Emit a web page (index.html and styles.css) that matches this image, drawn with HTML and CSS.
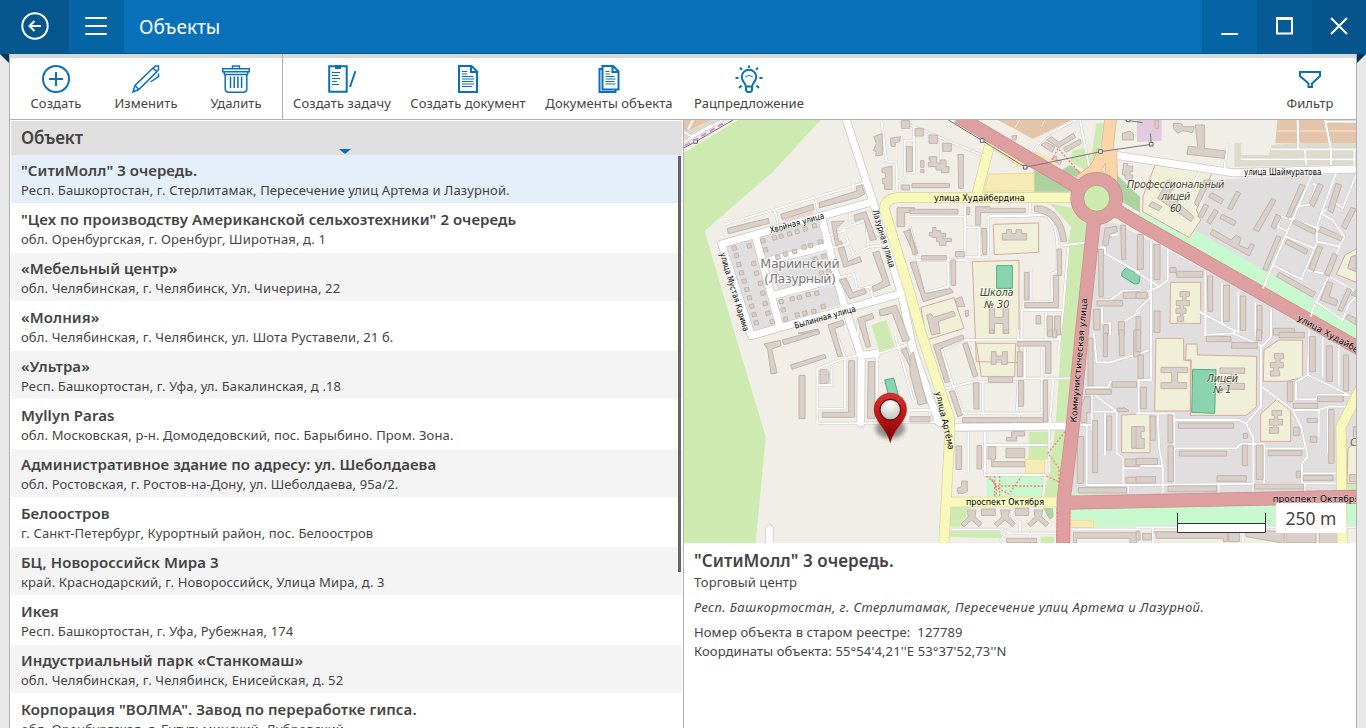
FILE: index.html
```html
<!DOCTYPE html>
<html lang="ru">
<head>
<meta charset="utf-8">
<title>Объекты</title>
<link rel="stylesheet" href="styles.css">
</head>
<body>
<div class="app">
<header class="titlebar">
  <button class="tb-back"><svg width="30" height="30" viewBox="0 0 30 30"><circle cx="15" cy="15" r="12.7"/><path d="M21 15H10M14.500 10 9.500 15l5 5"/></svg></button>
  <button class="tb-menu"><svg width="22" height="18" viewBox="0 0 22 18"><path d="M0 1h22M0 9h22M0 17h22"/></svg></button>
  <h1>Объекты</h1>
  <button class="tb-min"><svg width="17" height="18" viewBox="0 0 17 18"><path d="M0 17h17"/></svg></button>
  <button class="tb-max"><svg width="17" height="18" viewBox="0 0 17 18"><path d="M1 1h15v15.500H1z"/><path d="M0 1.500h17" stroke-width="3"/></svg></button>
  <button class="tb-close"><svg width="18" height="18" viewBox="0 0 18 18"><path d="M1 1l16 16M17 1 1 17"/></svg></button>
</header>
<div class="frame">
  <svg class="fold left" width="9" height="9"><path d="M0 0h9v9z"/></svg>
  <main class="window">
    <nav class="toolbar">
      <div class="group edit">
        <button class="tool"><svg viewBox="0 0 28 28"><circle cx="14" cy="14" r="13"/><path d="M14 7v14M7 14h14"/></svg><span>Создать</span></button>
        <button class="tool"><svg viewBox="0 0 28 28"><path class="thin" d="M1 27 3 20.500 21 3l3.800 3.800L6.800 24.500zM3 20.500l3.800 4M21.500 2.800l1.800-1.800h3.200v3.500l-1.700 2M26.500 8.500v3L18.500 17"/></svg><span>Изменить</span></button>
        <button class="tool"><svg viewBox="0 0 28 28"><path class="thin" d="M.7 3.700h26.600v3H.7zM2 7l.5 2.500h23L26 7M3.200 9.500v14q0 3.800 3.500 3.800h14.600q3.500 0 3.500-3.800v-14M10.500 4V1h7v3M8.500 11.500V23M12.200 11.500V23M15.900 11.500V23M19.600 11.500V23"/></svg><span>Удалить</span></button>
      </div>
      <div class="group docs">
        <button class="tool w1"><svg viewBox="0 0 28 28"><path d="M1.200 1.200h17.500v25.600H1.200z"/><path class="solid" d="M7 0h6v4H7z"/><path class="line" d="M4 7.500h8M4 10.500h6.500M4 13.500h8M4 16.500h5M4 19.500h7"/><path d="M27.500 6 22 22"/></svg><span>Создать задачу</span></button>
        <button class="tool w2"><svg viewBox="0 0 28 28"><path d="M5 1h12.500L23 6.500V27H5zM17 1v6h6"/><path class="line" d="M8 6.500h5M8 9h5M8 11.500h11M8 14h12M8 16.500h11M8 19h12M8 21.500h10"/></svg><span>Создать документ</span></button>
        <button class="tool w3"><svg viewBox="0 0 28 28"><path d="M7.500 1h10.700L23.500 6.500v18h-16zM17.500 1v6h6M7 4H4.500v23H20.500v-2"/><path class="line" d="M10.500 6.500h4M10.500 9h4M10.500 11.500h9M10.500 14h10M10.500 16.500h9M10.500 19h10"/></svg><span>Документы объекта</span></button>
        <button class="tool w4"><svg viewBox="0 0 28 28"><path d="M10.800 21.500c0-3.500-4-4.500-4-9.500a7.200 7.200 0 0 1 14.400 0c0 5-4 6-4 9.500zM11 22v3.500l1.500 1.500h3l1.500-1.500V22M14 .5V3M5 2.700l2 2M23 2.700l-2 2M.5 13h3M24.500 13h3M4 23l2.500-2.500M24 23l-2.500-2.500"/><path class="line" d="M10.500 12q3.500-3 7 0"/></svg><span>Рацпредложение</span></button>
      </div>
      <button class="tool filter"><svg viewBox="0 0 28 28"><path d="M4 7h20v4l-8 7.500V22h-3.500v-3.500L4 11z"/></svg><span>Фильтр</span></button>
    </nav>
    <div class="content">
      <section class="list">
        <div class="list-head"><span>Объект</span><i class="sort"></i></div>
        <div class="rows">
          <article class="sel"><b>"СитиМолл" 3 очередь.</b><p>Респ. Башкортостан, г. Стерлитамак, Пересечение улиц Артема и Лазурной.</p></article>
          <article><b>"Цех по производству Американской сельхозтехники" 2 очередь</b><p>обл. Оренбургская, г. Оренбург, Широтная, д. 1</p></article>
          <article><b>«Мебельный центр»</b><p>обл. Челябинская, г. Челябинск, Ул. Чичерина, 22</p></article>
          <article><b>«Молния»</b><p>обл. Челябинская, г. Челябинск, ул. Шота Руставели, 21 б.</p></article>
          <article><b>«Ультра»</b><p>Респ. Башкортостан, г. Уфа, ул. Бакалинская, д .18</p></article>
          <article><b>Myllyn Paras</b><p>обл. Московская, р-н. Домодедовский, пос. Барыбино. Пром. Зона.</p></article>
          <article><b>Административное здание по адресу: ул. Шеболдаева</b><p>обл. Ростовская, г. Ростов-на-Дону, ул. Шеболдаева, 95а/2.</p></article>
          <article><b>Белоостров</b><p>г. Санкт-Петербург, Курортный район, пос. Белоостров</p></article>
          <article><b>БЦ, Новороссийск Мира 3</b><p>край. Краснодарский, г. Новороссийск, Улица Мира, д. 3</p></article>
          <article><b>Икея</b><p>Респ. Башкортостан, г. Уфа, Рубежная, 174</p></article>
          <article><b>Индустриальный парк «Станкомаш»</b><p>обл. Челябинская, г. Челябинск, Енисейская, д. 52</p></article>
          <article><b>Корпорация "ВОЛМА". Завод по переработке гипса.</b><p>обл. Оренбургская, г. Бугульминский, Дубровский</p></article>
        </div>
        <i class="scroll"></i>
      </section>
      <section class="detail">
        <div class="map">
<svg class="osm" width="672" height="423" viewBox="3 0 2016 1269">
<defs>
  <radialGradient id="ball" cx=".5" cy=".25" r=".8"><stop offset="0" stop-color="#fff"/><stop offset="1" stop-color="#bcbcbc"/></radialGradient>
  <linearGradient id="pin" x1="0" y1="0" x2="0" y2="1"><stop offset="0" stop-color="#dc3030"/><stop offset=".5" stop-color="#b91414"/><stop offset="1" stop-color="#700"/></linearGradient>
  <filter id="soft"><feGaussianBlur stdDeviation="7"/></filter>
  <g id="lanes">
    <path d="M125,313 545,188M275,272 285,308M398,238 405,272M510,190V210M0,32 25,50 85,15M15,28 30,0M0,68 120,0"/>
    <path d="M480,325 550,300 555,382 510,402 480,325M555,382 600,375M490,330 440,345M430,388 495,372M510,402 480,440M470,472 512,462 525,510 560,500 570,535M525,600V645M500,280V310M595,0 610,125 640,125 643,215M643,188 665,170V62H690"/>
    <path d="M403,910V745L486,715 585,690M446,735V795H405M403,866H486V715L460,640M403,910H533L800,905M582,700V900M590,700 690,668M635,640 690,840M740,905V870L681,870"/>
    <g transform="translate(681 0)">
      <path d="M0,15 215,105M12,15V158H0M92,70V125M0,290H165V248M165,290V410L215,412H235V290L360,288V250M165,322H208V410M235,288 400,285Q440,300 442,380V455L425,460 427,545H340V570H460M0,320 20,400V420H165M115,412V500L40,520 20,430M362,445V540M442,378 528,368M475,380 460,560 445,700M408,575V645M335,570V700M510,0 540,155M370,100Q380,50 500,0"/>
      <path d="M560,383H585V400L690,460M600,345 580,370V383M600,345 620,345V315M560,540H600L640,512H690M580,545 576,570V610H600V645M625,615 690,575M685,390V420"/>
    </g>
    <g transform="translate(1359 0)">
      <path d="M275,70 265,150M190,155 145,250M405,88H660M315,118H660M485,0 487,85M567,0 585,88V135M507,90 510,135M655,85V135M570,5H660M600,160 545,310 542,370 495,480M530,160 380,505M660,165 620,265 600,250 555,280 590,300 625,350 610,380 545,365M530,190 540,195 520,255 490,258M470,295 545,325 625,350M450,350 535,385M470,298 435,290 425,320 455,335M515,450 580,465 520,590M610,380 580,470 660,515M540,545 620,600 640,550 660,530M410,435 500,480"/>
      <path d="M0,455 70,500 95,480V385M45,365V645M0,575 45,530 35,515 70,500M208,450V645M258,490V610M307,515V640M358,545V645M405,565V645M190,575 300,635"/>
    </g>
    <g transform="translate(681 630)">
      <path d="M95,60 160,30 448,28M95,60 130,170 190,155H325L320,245M345,55V145M395,55V250H160L130,170M325,145H480M218,155V255M105,175 135,170M325,0V30M445,0V30M430,145 418,290V430M175,305V428M225,305V435H405L400,500M225,345H410M328,250V285M120,598H280L300,610H440M285,610 270,635M305,535V560L330,575V605M360,640V610M480,598H690"/>
      <path d="M550,0 560,97H600L690,70M525,172H595L600,155H690M535,180 620,245H550M545,180V300M530,285V465H690M585,250V375M620,245V370L640,385V465M545,285H510M655,465V490M640,415H690"/>
    </g>
    <g transform="translate(1359 630)">
      <path d="M45,0V150H8V250M0,75 40,60M0,250H115V460M65,250 70,360 80,405V490M0,408H80M0,465 500,460M115,270H310L330,280 375,230V48M208,0V15L290,10 300,0M290,10 380,48 405,20V0M330,280 352,325V490M115,355H300L315,342H385V460M385,355H505M378,170 470,240 495,290 515,380 498,400V460M470,240H550L575,230H630M548,240V320M575,235V370M520,0 515,135 480,155V208H540L545,195H640L515,135M500,430H600M500,460H600M507,460V490M248,465V490M560,0V140M608,0V170M0,592H660M50,595V640M320,595V640M448,595V640M545,595V640"/>
    </g>
  </g>
  <g id="streets">
    <path d="M490,0 570,245 655,520 691,690 766,905 810,922 1156,918M1290,105 1359,115 1650,158 2030,147M116,372 570,245M116,372 205,647 655,520M218,350 290,620M415,290 480,545 535,710 533,910M535,705 580,702M265,420 435,378M275,525 455,478M259,1269V1226"/>
  </g>
  <g id="avenues">
    <path d="M1165,233H645Q598,238 606,275L681,520 716,645 798,890 801,930 790,1130 782,1280M921,70 881,225M790,1146H1140M2040,790 1974,920 1976,1120M1976,1150 1978,1280"/>
  </g>
  <g id="trunks">
    <path d="M825,-10 1160,187 1241,235 1359,306 2040,692M1234,290 1196,645 1168,930 1142,1140 1140,1280M1150,1148 1359,1144 2030,1130"/>
    <circle cx="1241" cy="235" r="58"/>
  </g>
</defs>
<rect class="land" width="2022" height="1269"/>
<path class="forest" d="M0,100 165,0H413L270,155 65,333 155,640 248,950 218,1269H0z"/>
<path class="indust" d="M0,0H85L0,40zM945,0 1050,55 1110,0z"/>
<path class="yard" d="M0,42 85,0H130L0,75z"/>
<path class="indust" d="M1783,0H2022V70H1777zM945,0H1165L1050,57z"/>
<path class="ind-line" d="M1780,33H2022M1560,0M995,25 1010,0M1075,20 1085,0"/>
<path class="yard" d="M1654,70H1675V105H1758L1765,75 1830,70H2022V135L1654,140z"/>
<path class="mall" d="M1362,0H1436V62L1362,66z"/>
<path class="resid" d="M225,350 410,305 430,368 238,420zM130,380 210,360 280,635 200,645zM265,440 440,395 460,475 285,515zM285,540 465,492 480,550 305,610z"/>
<path class="resid" d="M1250,310 1300,310 2022,690V1130H1160L1190,900zM1584,180 2022,160V620L1535,335 1545,290z"/>
<path class="lawn" d="M1379,272 1519,353 1540,333 2022,612V680L1359,290zM1160,1165 2022,1150V1215L1160,1222zM910,1068H1085V1130H910zM1160,1118h100v8h-100z"/>
<path class="forest" d="M1100,250 1164,320 1150,400 1136,645 1117,930 1085,1130H1135L1176,645 1215,310 1170,265zM1240,10 1262,10 1250,90 1225,160 1160,125 1170,90 1200,85 1225,110zM565,615 610,600 635,680 590,695zM800,1160H865L830,1220H800zM800,1233H950L960,1255 800,1250zM1037,935H1098V1018H1037zM1073,1250h40v20h-40zM1990,1095h32v20h-32z"/>
<path class="wood" d="M1052,150 1180,205 1170,215H1052zM1130,155 1160,135 1195,155 1180,170zM1285,115 1302,120V165L1371,230V278L1300,235 1270,190zM1080,1163 1110,1165 1112,1190 1100,1200z"/>
<path class="school" d="M931,313 1067,309V397L934,404zM868,425 1008,421V728L880,725zM714,562 813,533 843,625 730,660zM1463,487H1553V610H1461zM1416,135 1587,158 1540,270 1553,300 1519,353 1379,275 1380,230zM1419,655H1502L1502,720H1525L1522,873H1415zM1510,672H1542L1543,705 1721,709 1720,860 1690,886H1522V722H1508zM1359,883H1401V998H1316V885zM1787,660 1859,661V772L1809,784H1741L1743,690zM1780,839 1823,872V964H1733V882zM2022,385 1986,405 1960,463 2022,488zM1995,985 2022,960V1090H1992zM880,670H998L995,770 895,769z"/>
<path class="parking" d="M918,162 1053,160V212L903,214zM1053,94 1120,130 1120,145 1053,102zM935,90 1030,130 1010,140zM1027,1018H1085V1060H1027zM1161,1202H1232V1223H1161z"/>
<path class="pitch" d="M941,437H988V505H941zM1331,443 1371,465 1368,490 1355,492 1316,468 1318,455zM1529,748 1599,749 1595,880 1526,877zM605,780 632,774 650,840 620,840z"/>
<use href="#lanes" class="lane-case"/>
<use href="#streets" class="street-case"/>
<use href="#lanes" class="lane"/>
<use href="#streets" class="street"/>
<g class="bld">
  <path d="M133,325 256,295 259,310 136,341zM293,283 390,253 393,268 298,299zM408,248 522,213 520,200 537,195 545,222 527,232 410,263zM445,305 484,303 460,325 467,365 475,363 478,372 459,378zM513,285 549,275 580,358 563,362 542,295 516,304zM465,385 483,380 495,425 530,410 536,425 483,442zM569,398 588,393 621,495 572,515 568,500 600,484zM468,480 490,475 509,518 545,505 550,520 500,537zM572,50 598,40 598,105 578,108 580,95 571,92 580,70zM597,145 627,138V208H605V192L598,190V175H607V160L597,157zM622,55 652,50 650,65 638,68 636,80 624,78zM655,2H680V25H655zM670,80H688V155H670zM655,195H680V210H655zM642,263H695V278H665V320H642zM662,335 680,330 705,400 695,405zM523,595 568,580 572,595 545,605 563,680 550,682zM588,570 640,555 680,660 660,665 628,580 592,588zM345,640 405,627 408,640zM435,615 480,600 483,615 455,625 478,708 465,710z"/>
  <path d="M243,672 291,661 294,677 266,687 282,759 264,762 254,687zM298,660 407,630 410,641 303,674zM322,735 425,703 429,714 327,748zM348,766H366V896H348zM411,750 430,748 438,758V785L430,791H411zM497,722H515V892H418V877H497zM556,725H575V895H553zM655,690 670,682 700,780 681,740z"/>
  <path d="M146,380 158,377 162,389 150,392zM153,402 165,399 168,411 156,414zM160,429 172,426 175,438 163,441zM168,454 180,451 183,463 171,466zM176,479 188,476 191,488 179,491zM184,504 196,501 199,513 187,516zM192,529 204,526 207,538 195,541zM199,554 211,551 214,563 202,566zM206,579 218,576 221,588 209,591zM212,604 224,601 227,613 215,616zM191,373 203,370 206,382 194,385zM205,426 217,423 220,435 208,438zM213,455 225,452 228,464 216,467zM225,485 237,482 240,494 228,497zM232,515 244,512 247,524 235,527zM239,546 251,543 254,555 242,558zM247,575 259,572 262,584 250,587zM260,600 272,597 275,609 263,612zM232,358 244,355 247,367 235,370zM240,385 252,382 255,394 243,397zM267,349 279,346 282,358 270,361zM287,344 299,341 302,353 290,356zM312,337 324,334 327,346 315,349zM335,330 347,327 350,339 338,342zM359,322 371,319 374,331 362,334zM387,313 399,310 402,322 390,325zM300,398 312,395 315,407 303,410zM327,390 339,387 342,399 330,402zM356,377 368,374 371,386 359,389zM375,372 387,369 390,381 378,384zM404,361 416,358 419,370 407,373zM277,407 289,404 292,416 280,419zM389,413 401,410 404,422 392,425zM415,404 427,401 430,413 418,416zM272,463 284,460 287,472 275,475zM409,457 421,454 424,466 412,469zM430,450 442,447 445,459 433,462zM320,532 332,529 335,541 323,544zM342,528 354,525 357,537 345,540zM368,519 380,516 383,528 371,531zM394,515 406,512 409,524 397,527zM287,540 299,537 302,549 290,552zM293,565 305,562 308,574 296,577zM300,593 312,590 315,602 303,605zM335,580 347,577 350,589 338,592zM358,575 370,572 373,584 361,587zM385,570 397,567 400,579 388,582zM413,555 425,552 428,564 416,567z"/>
  <g transform="translate(681 0)">
    <path d="M15,25H40V48H15zM57,45H83V70H57zM98,70H124V94H98zM32,122H42V142H32zM32,149H42V158H32zM57,110H80V127L90,132V120H108V140H117V158H95V150H78V140H55V128H62V120H57zM144,103H160V205H146zM6,190H118V203H6zM0,262 8,268H144V282L0,281zM170,262H179V284H170zM197,260H240V265H346V278H212V315H197zM373,258 395,258Q460,275 470,364L453,365Q445,285 374,274zM68,323H78V332H92V340H107V350H97V355H124V365H108V376H88V365H80V352H68V348H58V338H68zM0,325 18,400 10,405 0,375zM35,407H109V420H35zM136,395H164V410H136zM215,325H230V403H218zM277,340H290V329H305V340H318V329H335V340H350V360H277zM122,420H137V496H124zM0,428 18,425 45,520 122,506 130,517 40,545zM343,457H357V540H343zM441,387H455V466H443zM430,466H446V563H345V547H430zM135,538 155,530 165,560 143,560zM165,573 175,570V588L168,590zM50,585 62,580 70,592 130,573 137,587 85,605 90,640 65,645zM238,566H254V592H279V566H296V640H279V610H254V640H238zM378,587H392V612H378zM411,588H428V645H411zM434,588H452V645H434zM393,75 407,66 434,80 427,97zM410,60 424,50 447,67 490,40 497,52 446,83zM460,85 510,57 514,70 468,97zM305,48 320,46 318,60 310,60zM425,115 440,108 440,120 455,122 450,135z"/>
    <path d="M637,40 660,33 670,42V60H637zM640,130H652V138H668V155H660V165H668V182H655L645,175V165H637V148H640zM585,325 620,318 622,335 600,343 593,378 578,375zM632,315H647V418H635zM565,388H580V530H567zM690,515 640,517V535H690zM561,541H638V558H561zM551,568H570V630H551zM580,614H595V645H580zM625,605H643V645H625z"/>
  </g>
  <g transform="translate(1359 0)">
    <path d="M57,0H67V25H57zM112,10 135,10 142,20H175L170,38 140,32 125,40 112,25zM178,15H205V85L268,93 265,115 153,103 157,78 185,82zM65,235 95,180 117,190 100,225 173,290 165,305 80,245zM38,258 48,245 78,260 68,272zM175,250 205,180H225L185,260zM185,290 205,252 218,258 200,292zM212,305 235,268 247,275 223,313zM217,230 228,218 263,238 255,252zM275,265 302,213 314,220 287,270zM252,295 258,283 300,303 294,317zM222,343 230,328 285,360 300,345 315,355 308,375 335,387 345,370 355,375 340,408zM352,328 407,235 420,242 368,335zM450,290 493,192 507,198 463,293zM405,320 420,283 436,290 416,328zM380,448 422,347 435,352 393,452zM470,310 478,298 540,330 535,343zM447,370 455,358 516,390 510,403zM520,250 547,190 562,197 533,262zM518,445 545,377 560,382 533,455zM548,335 555,320 620,350 615,363zM422,470 430,457 538,517 530,532zM565,463 590,400 605,405 580,470zM575,270 600,190 617,195 590,280zM616,320 645,262 660,267 630,328zM553,540 575,485 590,490 580,530 605,540 600,558zM605,570 635,503 647,510 618,575zM628,595 636,583 660,595V615zM645,525 660,510V530zM635,445 645,410 660,405V455z"/>
    <path d="M4,343H22V448H4zM54,373H72V478H54zM0,517H35V535H0zM54,573H72V637H54zM0,590H14V645H0zM102,442H120V454H200V472H122V458H102zM214,468H230V574H216zM262,496H280V604H262zM313,528H329V631H313zM363,556H378V645H363zM412,625H475V645H412zM132,515H160V530H150V542H160V557H143V565H150V580H141V590H143V604H124V590H134V580H120V565H132V557H121V542H140V530H132z"/>
  </g>
  <g transform="translate(681 630)">
    <path d="M70,45 158,15 163,27 90,57 118,155 105,158zM158,42 172,38 204,137 190,142zM322,35H423V130H407V48H322zM322,65H337V140H322zM235,140H308V157H235zM190,158H207V237H192zM325,152H341V229H325zM400,150H413V275H400zM118,185 133,182 157,255 143,260zM158,263H400V278H158zM0,80 10,65 50,220 25,225 0,130zM0,260H60V276H0zM245,65H258V78H277V65H292V103H275V90H258V103H243zM238,0H250V10H238zM282,0H296V10H282zM413,0H427V20H413zM428,0H440V22H428zM138,348H155V418H138zM201,347H215V417H201zM290,322H305V305H344V318H320V333H290zM234,350H257V387H252V395H344V410H245V387H234zM288,355H344V383H288zM141,475 155,470V453H172V485L160,490H145zM153,582 175,560 172,540H198L195,560 216,580 207,590 185,570 162,590zM253,582 275,560 272,540H298L295,560 316,580 307,590 285,570 262,590zM353,582 375,560 372,540H398L395,560 416,580 407,590 385,570 362,590zM214,537H256V556H214zM316,535H356V556H316zM290,625H380V638H290z"/>
    <path d="M534,25H549V167H534zM580,10H592V80H580zM628,0H642V77H628zM671,0H690V80H671zM606,155H680V172H606zM527,178H604V193H527zM513,230 525,200H541V248H530V277H513zM622,235H640V232L655,240V245H622zM590,258H605V360H590zM502,320H521V460H502zM548,272H563V428H548zM505,473H650V489H505zM648,442H690V459H648zM645,387H690V409H645zM665,290H690V310H680V330H690V355H665zM490,607H680V640H660V625H500V640H490z"/>
  </g>
  <g transform="translate(1359 630)">
    <path d="M0,0H14V65H0zM6,75H22V145H6zM13,172H31V236H13zM75,112H155V128H125V158H152V176H75V158H107V128H75zM252,114H326V130H300V160H326V178H252V160H285V130H252zM96,255H110V338H96zM96,348H112V455H96zM43,258H58V331H43zM0,385H64V404H0zM0,440H58V459H0zM127,279H293V295H127zM130,363H272V378H130zM319,345H335V407H319zM361,345H381V448H361zM397,362H498V377H397zM322,310H334V325H322zM243,437H331V454H243zM96,468H242V485H96zM355,462H503V477H355zM211,18 285,20V35H211zM287,38H364V55H287zM362,0H377V32H362zM429,7H505V23H429zM520,20H538V125H520zM571,48H589V155H571zM622,75H638V183H622zM454,155H470V215H454zM472,220H545V235H472zM544,198H622V215H544zM578,238H594V400H578zM513,265H545V277H513zM523,319H542V337H523zM472,292H490V317H472zM481,423H493V443H481zM502,436H591V451H502zM415,70H443V86H432V97H442V113H428V123H431V138H403V123H413V113H403V97H420V86H415zM408,241H437V256H425V268H440V285H422V293H428V310H400V293H412V285H400V268H415V256H408zM640,433H662V455H640zM652,290H662V325H652zM0,290H25V305H15V325H25V355H0zM0,605H12V630H0zM20,610H46V630H20zM55,605H275V635H262V625H60V615zM278,605H310V635H278zM330,603H445V640L330,620zM450,603H540V638H450zM550,605H630V640H550z"/>
  </g>
</g>
<path class="foot" d="M1107,120 1125,85 1195,165M910,1068 945,1098H1080M920,1068 940,1100V1130M935,1068V1130M950,1068V1130M935,1100 978,1122 1015,1070M1146,935 1095,1000 1132,1050M1090,1068 1128,1085M1128,1050V1125"/>
<path class="orange-case" d="M1283,-5 1268,120M1256,105Q1245,145 1220,162L1285,180 1284,105z"/>
<path class="orange" d="M1283,-5 1268,120M1256,105Q1245,145 1220,162L1285,180 1284,105z"/>
<use href="#avenues" class="avenue-case"/>
<use href="#avenues" class="avenue"/>
<use href="#trunks" class="trunk-case"/>
<use href="#trunks" class="trunk"/>
<circle class="island" cx="1241" cy="235" r="39"/>
<path class="foot" d="M1122,1165V1269M1160,1165V1269"/>
<path class="lane" d="M1739,505 1750,485M1883,590 1890,575"/>
<path class="power" d="M0,85 38,65 150,0M796,0 898,62 1027,142 1253,95 1405,73 1402,40M1325,0 1379,8"/>
<path class="mast" d="M32,59h11v11h-11zM892,56h11v11h-11zM1021,136h11v11h-11zM1247,89h11v11h-11zM1399,67h11v11h-11zM1330,-4h11v9h-11z"/>
<path class="purple" d="M5,78 128,6"/>
<path class="pink" d="M298,300 390,272 392,280 312,304z"/>
<g class="road-name">
  <text x="753" y="243" textLength="272" lengthAdjust="spacingAndGlyphs">улица Худайбердина</text>
  <text x="1683" y="166" textLength="232" lengthAdjust="spacingAndGlyphs">улица Шаймуратова</text>
  <text x="849" y="1156" textLength="234" lengthAdjust="spacingAndGlyphs">проспект Октября</text>
  <text x="1769" y="1146" textLength="262" lengthAdjust="spacingAndGlyphs">проспект Октября</text>
  <text transform="translate(263 340) rotate(-15.500)" textLength="168" lengthAdjust="spacingAndGlyphs">Хвойная улица</text>
  <text transform="translate(337 626) rotate(-16)" textLength="190" lengthAdjust="spacingAndGlyphs">Былинная улица</text>
  <text transform="translate(568 272) rotate(73)" textLength="180" lengthAdjust="spacingAndGlyphs">Лазурная улица</text>
  <text transform="translate(110 401) rotate(73)" textLength="245" lengthAdjust="spacingAndGlyphs">улица Мустая Карима</text>
  <text transform="translate(757 817) rotate(77)" textLength="178" lengthAdjust="spacingAndGlyphs">улица Артёма</text>
  <text transform="translate(1180 908) rotate(-85)" textLength="374" lengthAdjust="spacingAndGlyphs">Коммунистическая улица</text>
  <text transform="translate(1841 599) rotate(29)" textLength="290" lengthAdjust="spacingAndGlyphs">улица  Худайбердина</text>
</g>
<g class="place-name">
  <text x="351" y="443" textLength="238">Мариинский</text>
  <text x="351" y="489" textLength="216">(Лазурный)</text>
</g>
<g class="school-name">
  <text x="941" y="527" textLength="100">Школа</text><text x="941" y="563" textLength="76">№ 30</text>
  <text x="1478" y="205" textLength="292">Профессиональный</text><text x="1478" y="241" textLength="88">лицей</text><text x="1478" y="277" textLength="34">60</text>
  <text x="1618" y="785" textLength="94">Лицей</text><text x="1618" y="820" textLength="54">№ 1</text>
  <text x="2012" y="978">С</text>
</g>
<ellipse class="shade" cx="622" cy="925" rx="44" ry="30"/>
<path class="pin" d="M622,969C612,925 573,905 573,868a49,49 0 0 1 98,0C671,905 632,925 622,969z"/>
<circle class="ball" cx="622" cy="869" r="31"/>
</svg>
          <div class="scale"><svg width="90" height="20"><path class="bar" d="M1 11h88v8H1z"/><path d="M.5 0v19.500M88.500 0v19.500M.5 10.500h88M.5 19.500h88"/></svg><span>250 m</span></div>
        </div>
        <div class="info">
          <h2>"СитиМолл" 3 очередь.</h2>
          <p class="kind">Торговый центр</p>
          <p class="addr">Респ. Башкортостан, г. Стерлитамак, Пересечение улиц Артема и Лазурной.</p>
          <p class="num">Номер объекта в старом реестре:&nbsp; 127789</p>
          <p class="geo">Координаты объекта: 55°54'4,21''E 53°37'52,73''N</p>
        </div>
      </section>
    </div>
  </main>
  <svg class="fold right" width="9" height="9"><path d="M0 0h9L0 9z"/></svg>
</div>
</div>
</body>
</html>
```
FILE: styles.css
```css
* { box-sizing: border-box; }
body { margin: 0; font-family: "Noto Sans", "Open Sans", sans-serif; color: #444; background: #e8e8e8; overflow: hidden; }
button { border: 0; background: none; padding: 0; margin: 0; font: inherit; color: inherit; }
h1, h2, p { margin: 0; font-weight: 400; }
.app { height: 728px; display: flex; flex-direction: column; overflow: hidden; }
.titlebar { height: 54px; flex: none; display: flex; align-items: stretch; background: #0871ba; border-bottom: 1px solid #05568f; }
.titlebar button { display: flex; align-items: center; justify-content: center; width: 55px; padding: 0 0 1px; }
.titlebar svg { fill: none; stroke: #fff; stroke-width: 2; }
.titlebar h1 { flex: 1; padding-left: 15px; font-size: 19px; line-height: 54px; color: #fff; }
.titlebar .tb-back { width: 69px; background: #05568f; }
.titlebar .tb-menu { background: #0564a4; padding-right: 1px; }
.tb-min { background: #0564a4; }
.tb-max { background: #065a96; }
.titlebar .tb-close { width: 54px; background: #05548c; }
.frame { flex: 1; min-height: 0; display: flex; justify-content: space-between; }
.fold { flex: none; fill: #023558; }
.window { width: 1348px; flex: none; border: solid #b0b0b0; border-width: 0 1px; background: #fff; display: flex; flex-direction: column; }
.toolbar { height: 66px; flex: none; display: flex; border-top: 4px solid #d9d9d9; border-bottom: 1px solid #b0b0b0; }
.group { display: flex; }
.edit { padding-left: 1px; border-right: 1px solid #b0b0b0; width: 273px; margin-top: -4px; padding-top: 4px; }
.docs { flex: 1; }
.tool { width: 90px; flex: none; display: flex; flex-direction: column; align-items: center; padding-top: 7px; font-size: 13px; line-height: 20px; letter-spacing: .08px; white-space: nowrap; }
.tool svg { width: 28px; height: 28px; fill: none; stroke: #0871ba; stroke-width: 2; }
.tool .thin { stroke-width: 1.500px; }
.tool .line { stroke-width: 1.200px; }
.tool .solid { fill: #0871ba; stroke: none; }
.w1 { width: 118px; } .w2 { width: 134px; } .w3 { width: 148px; } .w4 { width: 132px; }
.filter { width: 92px; }
.content { flex: 1; min-height: 0; display: flex; }
.list { width: 674px; flex: none; border-right: 1px solid #b0b0b0; position: relative; padding: 1px 1px 0; }
.list-head { height: 34px; background: #e0e0e0; padding-left: 10px; font-size: 17px; line-height: 34px; letter-spacing: -.1px; font-weight: 600; position: relative; }
.sort { position: absolute; left: 328px; top: 28px; border: solid transparent; border-width: 5px 6px 0; border-top-color: #0871ba; }
.rows { display: flex; flex-direction: column; gap: 1px; }
.rows article { height: 48px; flex: none; padding: 5px 10px 0; white-space: nowrap; }
.rows article:nth-child(odd) { background: #f4f4f4; }
.rows article.sel { background: #e4eff9; }
.rows b { display: block; font-size: 15px; line-height: 21px; letter-spacing: .07px; font-weight: 600; }
.rows p { font-size: 13px; line-height: 19px; letter-spacing: .13px; }
.scroll { position: absolute; right: 2px; top: 36px; width: 3px; height: 416px; background: #666; }
.detail { flex: 1; min-width: 0; display: flex; flex-direction: column; }
.map { height: 423px; position: relative; }
.osm { display: block; }
.scale { position: absolute; right: 10px; bottom: 10px; display: flex; }
.scale svg { margin: 10px 9px 0 0; stroke: #333; stroke-width: 1; fill: none; }
.scale .bar { fill: #fff; stroke: none; }
.scale span { width: 70px; height: 30px; background: #fff; text-align: center; font-size: 17.500px; line-height: 31px; }
.info { padding: 6px 10px; white-space: nowrap; font-size: 13px; line-height: 19px; letter-spacing: .12px; }
.info h2 { font-size: 17px; line-height: 24px; font-weight: 600; letter-spacing: .08px; }
.info .addr { font-style: italic; margin: 6px 0; letter-spacing: .41px; }

.osm path, .osm use { fill: none; }
.land { fill: #f1eee8; }
.osm .forest { fill: #cdebb0; }
.osm .indust { fill: #e4c5a9; }
.osm .ind-line { stroke: #f4e8dc; stroke-width: 3; }
.osm .yard { fill: #dddccc; }
.osm .mall { fill: #e2cbde; }
.osm .resid { fill: #e0dede; }
.osm .lawn { fill: #c8f9ce; }
.osm .wood { fill: #aed1a0; }
.osm .school { fill: #f0f0d8; stroke: #dba99c; stroke-width: 3; }
.osm .parking { fill: #f6eab7; stroke: #f3dc8e; stroke-width: 3; }
.osm .pitch { fill: #8ad3af; stroke: #53ad80; stroke-width: 3; }
.osm .bld path { fill: #d9d0c9; stroke: #c4b4a9; stroke-width: 3; }
.lane-case { stroke: #cfcdcb; stroke-width: 9; }
.osm .lane { stroke: #fff; stroke-width: 5.500; }
.street-case { stroke: #ccc; stroke-width: 26; stroke-linecap: round; stroke-linejoin: round; }
.street { stroke: #fff; stroke-width: 21; stroke-linecap: round; stroke-linejoin: round; }
.avenue-case { stroke: #d3d3a0; stroke-width: 32; stroke-linejoin: round; }
.avenue { stroke: #f8f8ba; stroke-width: 28; stroke-linejoin: round; }
.trunk-case { stroke: #c98b8d; stroke-width: 42; }
.trunk { stroke: #dd9fa0; stroke-width: 38; }
.osm .orange-case { stroke: #d8b48a; stroke-width: 38; }
.osm .orange { stroke: #f9d5a9; stroke-width: 34; }
.island { fill: #cdebb0; stroke: #c2a084; stroke-width: 3; }
.osm .foot { stroke: #fa8072; stroke-width: 4; stroke-dasharray: 6 5; }
.osm .power { stroke: #777; stroke-width: 3; }
.osm .mast { fill: #eee; stroke: #666; stroke-width: 3; }
.osm .purple { stroke: #c993c9; stroke-width: 6; stroke-dasharray: 17 12; }
.osm .pink { fill: #f3d0d0; }
.osm text { font-family: "DejaVu Sans", sans-serif; }
.road-name text { font-size: 26px; fill: #000; stroke: rgba(255,255,255,.35); stroke-width: 3; paint-order: stroke; }
.place-name text { font-size: 38px; fill: #777; stroke: #fff; stroke-width: 5; paint-order: stroke; text-anchor: middle; }
.school-name text { font-size: 29px; font-style: italic; fill: #4b4b35; stroke: rgba(255,255,255,.6); stroke-width: 4; paint-order: stroke; text-anchor: middle; }
.shade { fill: #333; opacity: .5; filter: url(#soft); }
.osm .pin { fill: url(#pin); stroke: #8c1010; stroke-width: 1; }
.ball { fill: url(#ball); stroke: #6b1010; stroke-width: 4; }
```
